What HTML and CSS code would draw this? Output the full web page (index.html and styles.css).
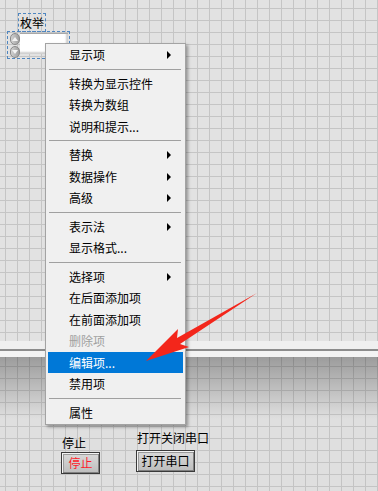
FILE: index.html
```html
<!DOCTYPE html>
<html lang="zh-CN">
<head>
    <meta charset="UTF-8">
    <meta name="viewport" content="width=device-width, initial-scale=1.0">
    <title>前面板 - 枚举</title>
    <link rel="stylesheet" href="styles.css">
</head>
<body>
    <div class="screen">
        <div class="pane pane-top">
            <div class="enum-label">枚举</div>
            <div class="enum-ctrl">
                <div class="spin">
                    <span class="spin-btn"><span class="spin-up"></span></span>
                    <span class="spin-btn"><span class="spin-down"></span></span>
                </div>
                <div class="enum-field"></div>
            </div>
        </div>

        <div class="splitter"></div>

        <div class="pane pane-bottom">
            <div class="ctl ctl-stop">
                <div class="ctl-label">停止</div>
                <button class="lv-btn lv-btn-red">停止</button>
            </div>
            <div class="ctl ctl-serial">
                <div class="ctl-label">打开关闭串口</div>
                <button class="lv-btn">打开串口</button>
            </div>
        </div>

        <ul class="menu">
            <li class="menu-item has-sub">显示项</li>
            <li class="menu-sep"></li>
            <li class="menu-item">转换为显示控件</li>
            <li class="menu-item">转换为数组</li>
            <li class="menu-item">说明和提示...</li>
            <li class="menu-sep"></li>
            <li class="menu-item has-sub">替换</li>
            <li class="menu-item has-sub">数据操作</li>
            <li class="menu-item has-sub">高级</li>
            <li class="menu-sep"></li>
            <li class="menu-item has-sub">表示法</li>
            <li class="menu-item">显示格式...</li>
            <li class="menu-sep"></li>
            <li class="menu-item has-sub">选择项</li>
            <li class="menu-item">在后面添加项</li>
            <li class="menu-item">在前面添加项</li>
            <li class="menu-item disabled">删除项</li>
            <li class="menu-item active">编辑项...</li>
            <li class="menu-item">禁用项</li>
            <li class="menu-sep"></li>
            <li class="menu-item">属性</li>
        </ul>

        <svg class="pointer-arrow" width="378" height="491" viewBox="0 0 378 491">
            <polygon points="257,293 180,344 189,347 146,361 178,329 177,338" fill="#f3261b"/>
        </svg>
    </div>
</body>
</html>
```

FILE: styles.css
```css
* {
    margin: 0;
    padding: 0;
    box-sizing: border-box;
}

body {
    width: 378px;
    height: 491px;
    overflow: hidden;
    font-family: "Noto Sans CJK SC", "Microsoft YaHei", sans-serif;
    font-size: 12px;
    color: #000;
}

.screen {
    position: relative;
    height: 491px;
    display: flex;
    flex-direction: column;
}

/* front panel grid */
.pane {
    position: relative;
}

.pane-top {
    height: 341px;
    background-color: #e2e2e2;
    background-image:
        linear-gradient(to right, #c5c5c5 1px, transparent 1px),
        linear-gradient(to bottom, #c5c5c5 1px, transparent 1px);
    background-size: 12px 12px;
    background-position: 5px 8px;
}

.splitter {
    height: 16px;
    background: linear-gradient(to bottom, #efefef 0 8px, #8c8c8c 8px 10px, #f3f3f3 10px 16px);
}

.pane-bottom {
    flex: 1;
    background-color: #dfdfdf;
    background-image:
        linear-gradient(to bottom, rgba(0, 0, 0, 0.3), rgba(0, 0, 0, 0) 62px),
        linear-gradient(to right, #c4c4c4 1px, transparent 1px),
        linear-gradient(to bottom, #c4c4c4 1px, transparent 1px);
    background-size: 100% 100%, 12px 12px, 12px 12px;
    background-position: 0 0, 5px 9px, 5px 9px;
}

/* enum control */
.enum-label {
    position: absolute;
    left: 18px;
    top: 13px;
    width: 28px;
    height: 19px;
    border: 1px dashed #4f86c0;
    line-height: 17px;
    padding-left: 1px;
}

.enum-ctrl {
    position: absolute;
    left: 7px;
    top: 31px;
    width: 63px;
    height: 28px;
    border: 1px dashed #4f86c0;
    display: flex;
    align-items: flex-start;
    padding: 1px 1px 0 2px;
}

.spin {
    width: 10px;
    height: 25px;
    display: flex;
    flex-direction: column;
    gap: 1px;
}

.spin-btn {
    flex: 1;
    display: flex;
    align-items: center;
    justify-content: center;
    border-radius: 5px;
    background: linear-gradient(to right, #d2d2d2, #9e9e9e);
    border: 1px solid #8a8a8a;
}

.spin-up,
.spin-down {
    width: 0;
    height: 0;
    border-left: 3px solid transparent;
    border-right: 3px solid transparent;
}

.spin-up {
    border-bottom: 4px solid #f4f4f4;
}

.spin-down {
    border-top: 4px solid #f4f4f4;
}

.enum-field {
    width: 49px;
    height: 21px;
    background: #fff;
    border-top: 1px solid #a8a8a8;
    box-shadow: inset -3px -3px 2px -1px #cfcfcf;
}

/* bottom controls */
.ctl {
    position: absolute;
    display: flex;
    flex-direction: column;
    align-items: flex-start;
}

.ctl-stop {
    left: 61px;
    top: 78px;
}

.ctl-serial {
    left: 136px;
    top: 73px;
}

.ctl-label {
    line-height: 16px;
    padding-left: 1px;
}

.lv-btn {
    font-family: inherit;
    font-size: 12px;
    color: #000;
    height: 22px;
    padding: 0 4px;
    border: 1px solid #3a3a3a;
    background: linear-gradient(to bottom, #dadada, #bdbdbd);
    box-shadow: inset 1px 1px 0 #f4f4f4, inset -1px -1px 0 #808080, inset 2px 2px 0 #9a9a9a;
    line-height: 18px;
}

.ctl-stop .lv-btn {
    width: 39px;
    margin-top: 1px;
}

.ctl-serial .lv-btn {
    width: 59px;
    margin-top: 4px;
}

.lv-btn-red {
    color: #ff1c2a;
}

/* context menu */
.menu {
    position: absolute;
    left: 45px;
    top: 43px;
    width: 141px;
    list-style: none;
    background: #f0f0f0;
    border: 1px solid #a3a3a3;
    box-shadow: 2px 2px 3px rgba(0, 0, 0, 0.35);
    padding: 0 2px 1px 2px;
}

.menu-item {
    position: relative;
    height: 21.5px;
    line-height: 21.5px;
    padding-left: 21px;
    white-space: nowrap;
}

.menu-item.has-sub::after {
    content: "";
    position: absolute;
    right: 12px;
    top: 7px;
    border-left: 4px solid #000;
    border-top: 4px solid transparent;
    border-bottom: 4px solid transparent;
}

.menu-item.disabled {
    color: #a0a0a0;
}

.menu-item.active {
    background: #0078d7;
    color: #fff;
}

.menu-sep {
    height: 7px;
    margin: 0 2px 0 1px;
    background: linear-gradient(to bottom, transparent 3px, #a0a0a0 3px 4px, transparent 4px);
}

.pointer-arrow {
    position: absolute;
    left: 0;
    top: 0;
    pointer-events: none;
}
```
